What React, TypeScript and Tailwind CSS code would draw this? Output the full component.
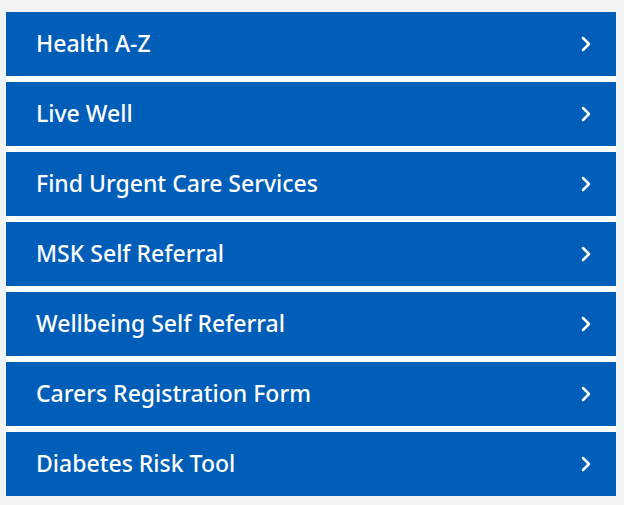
const LINKS = [
  'Health A-Z',
  'Live Well',
  'Find Urgent Care Services',
  'MSK Self Referral',
  'Wellbeing Self Referral',
  'Carers Registration Form',
  'Diabetes Risk Tool',
];

function Chevron() {
  return (
    <svg width="10" height="16" viewBox="0 0 10 16" fill="none" className="shrink-0">
      <path d="M2 2l6 6-6 6" stroke="white" strokeWidth="2.5" strokeLinecap="round" strokeLinejoin="round" />
    </svg>
  );
}

export default function App() {
  return (
    <div className="min-h-[505px] bg-[#f0f4f5] pt-3 pl-[6px] pr-2 font-['Noto_Sans',sans-serif]">
      <ul className="flex flex-col gap-[6px] bg-white">
        {LINKS.map((label) => (
          <li key={label}>
            <a
              href="#"
              className="flex h-16 items-center justify-between bg-[#005eb8] pl-[30px] pr-[25px] text-[23px] font-medium text-white"
            >
              <span className="-mt-[2px]">{label}</span>
              <Chevron />
            </a>
          </li>
        ))}
      </ul>
    </div>
  );
}
